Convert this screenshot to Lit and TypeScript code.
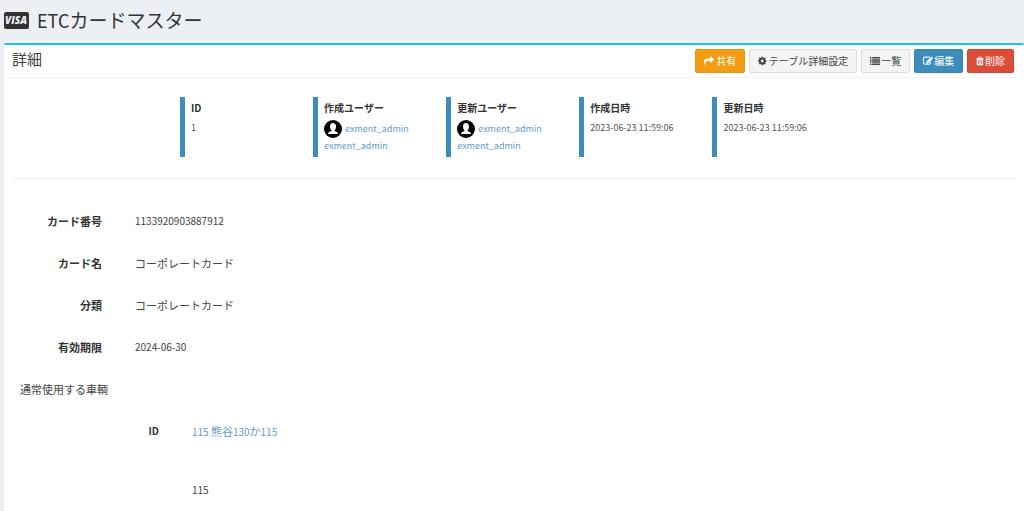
import { LitElement, html, css, svg } from "lit";
import { customElement } from "lit/decorators.js";

const share = svg`<path d="M1792 640q0 26-19 45l-512 512q-19 19-45 19t-45-19-19-45V896H928q-98 0-175.500 6t-154 21.500-133 42.500-105.500 69.500-80 101-48.500 138.500T214 1456q0 55 5 123 0 6 2.500 23.500t2.500 26.500q0 15-8.500 25t-23.500 10q-16 0-28-17-7-9-13-22t-13.500-30-10.500-24Q0 1286 0 1120q0-199 53-333 162-403 875-403h224V128q0-26 19-45t45-19 45 19l512 512q19 19 19 45z"/>`;
const gear = svg`<path fill-rule="evenodd" d="M1024 896q0-106-75-181t-181-75-181 75-75 181 75 181 181 75 181-75 75-181zm512-109v222q0 12-8 23t-20 13l-185 28q-19 54-39 91 35 50 107 138 10 12 10 25t-9 23q-27 37-99 108t-94 71q-12 0-26-9l-138-108q-44 23-91 38-16 136-29 186-7 28-36 28H657q-14 0-24.500-8.500T621 1634l-28-184q-49-16-90-37l-141 107q-10 9-25 9-14 0-25-11-126-114-165-168-7-10-7-23 0-12 8-23 15-21 51-66.500t54-70.500q-27-50-41-99l-183-27q-13-2-21-12.500T0 1005V783q0-12 8-23t19-13l186-28q14-46 39-92-40-57-107-138-10-12-10-24 0-10 9-23 26-36 98.500-107.500T337 263q13 0 26 10l138 107q44-23 91-38 16-136 29-186 7-28 36-28h222q14 0 24.500 8.500T915 158l28 184q49 16 90 37l142-107q9-9 24-9 13 0 25 10 129 119 165 170 7 8 7 22 0 12-8 23-15 21-51 66.500t-54 70.500q26 50 41 98l183 28q13 2 21 12.500t8 23.500z"/>`;
const list = svg`<path d="M0 192h256v256H0zM384 192h1408v256H384zM0 576h256v256H0zM384 576h1408v256H384zM0 960h256v256H0zM384 960h1408v256H384zM0 1344h256v256H0zM384 1344h1408v256H384z"/>`;
const edit = svg`<path stroke="currentColor" stroke-width="60" d="M888 1184l116-116-152-152-116 116v56h96v96h56zm440-720q-16-16-33 1L945 815q-17 17-1 33t33-1l350-350q17-17 1-33zm80 594v190q0 119-84.500 203.500T1120 1536H288q-119 0-203.500-84.500T0 1248V416q0-119 84.500-203.500T288 128h832q63 0 117 25 15 7 18 23 3 17-9 29l-49 49q-14 14-32 8-23-6-45-6H288q-66 0-113 47t-47 113v832q0 66 47 113t113 47h832q66 0 113-47t47-113v-126q0-13 9-22l64-64q15-15 35-7t20 29zm-96-738l288 288-672 672H640V992zm444 132l-92 92-288-288 92-92q28-28 68-28t68 28l152 152q28 28 28 68t-28 68z"/>`;
const trash = svg`<path fill-rule="evenodd" d="M512 1376V672q0-32-32-32h-64q-32 0-32 32v704q0 32 32 32h64q32 0 32-32zm256 0V672q0-32-32-32h-64q-32 0-32 32v704q0 32 32 32h64q32 0 32-32zm256 0V672q0-32-32-32h-64q-32 0-32 32v704q0 32 32 32h64q32 0 32-32zM480 384h448l-48-117q-7-9-17-11H546q-10 2-17 11zm928 32v64q0 32-32 32h-96v948q0 83-47 143.500t-113 60.500H288q-66 0-113-58.500T128 1464V512H32q-32 0-32-32v-64q0-32 32-32h309l70-167q15-37 54-63t79-26h320q40 0 79 26t54 63l70 167h309q32 0 32 32z"/>`;

const icon = (shape: unknown, width: number) =>
  html`<svg class="icon" viewBox="0 0 ${width} 1792" aria-hidden="true">${shape}</svg>`;

@customElement("user-link")
export class UserLink extends LitElement {
  static styles = css`
    :host { display: block; }
    .first { display: flex; align-items: center; gap: 3px; height: 18px; }
    .avatar { width: 18px; height: 18px; flex: none; }
    a { color: #5f9cc9; text-decoration: none; }
    .second { display: block; line-height: 16px; }
  `;
  render() {
    return html`
      <div class="first">
        <svg class="avatar" viewBox="0 0 36 36" aria-hidden="true">
          <circle cx="18" cy="18" r="18" fill="#000" />
          <path fill="#fff" d="M18 6c-4 0-6 3-6 7 0 3 1 6 3 8v1c-3 1-7 2-7 6h20c0-4-4-5-7-6v-1c2-2 3-5 3-8 0-4-2-7-6-7z" />
        </svg>
        <a href="#user">exment_admin</a>
      </div>
      <a class="second" href="#user">exment_admin</a>
    `;
  }
}

@customElement("app-root")
export class AppRoot extends LitElement {
  static styles = css`
    :host {
      display: flex;
      flex-direction: column;
      min-height: 100vh;
      box-sizing: border-box;
      padding-left: 4px;
      background: #ecf0f5;
      color: #333;
      font: 10px/16px "Noto Sans CJK JP", "Noto Sans", sans-serif;
    }
    a { color: #5f9cc9; text-decoration: none; }
    .title {
      display: flex;
      align-items: center;
      gap: 8px;
      height: 40px;
      margin: 0 0 3px;
      font-size: 19px;
      line-height: 38px;
      font-weight: 400;
    }
    .title .latin { font-size: 18px; }
    .visa { width: 25px; height: 17px; flex: none; }
    .visa text { font: italic 800 10px "Open Sans", sans-serif; fill: #ecf0f5; }
    .box {
      flex: 1;
      background: #fff;
      border-top: 2px solid #1fbfef;
      border-radius: 2px 2px 0 0;
    }
    .head {
      display: flex;
      align-items: center;
      justify-content: space-between;
      height: 32px;
      padding: 0 10px 0 8px;
      border-bottom: 1px solid #f4f4f4;
    }
    .head h2 { margin: 0; padding-bottom: 4px; font-size: 15px; font-weight: 400; color: #444; }
    .tools { display: flex; gap: 4px; }
    button {
      display: flex;
      align-items: center;
      gap: 1px;
      height: 24px;
      padding: 0 8px;
      border: 1px solid #ddd;
      border-radius: 2px;
      background: #f4f4f4;
      color: #444;
      font: inherit;
    }
    .spaced { gap: 2px; }
    .icon { height: 10px; fill: currentColor; }
    .share { background: #f39c12; border-color: #e99410; color: #fff; }
    .edit { background: #3c8dbc; border-color: #3a86b3; color: #fff; }
    .delete { background: #dd4b39; border-color: #d94330; color: #fff; }
    .meta {
      display: grid;
      grid-template-columns: repeat(5, 16%);
      margin: 0 8px;
      padding: 19px 4px 21px 168px;
      border-bottom: 1px solid #f1f1f1;
      font-size: 9px;
      color: #555;
    }
    .item { height: 60px; padding: 2px 0 0 6px; box-sizing: border-box; border-left: 5px solid #3c8dbc; }
    .item h3 { margin: 0 0 3px; font-size: 10px; line-height: 18px; color: #333; }
    .fields { margin: 21px 0 0; color: #444; }
    .row { display: flex; align-items: center; height: 42px; }
    .row dt { width: 98px; text-align: right; font-size: 11px; font-weight: 700; color: #333; }
    dd { margin: 0 0 0 33px; }
    .wide { font-size: 11px; }
    .group { margin: 0; padding-left: 16px; font-size: 11px; font-weight: 400; line-height: 42px; color: #444; }
    .nested { margin: 0; color: #444; }
    .nested dt { width: 155px; font-size: 10px; }
    .pair { display: grid; gap: 42px; padding: 13px 0; }
    .nested .row { height: auto; align-items: flex-start; }
    .nested dt { padding: 13px 0; }
  `;

  render() {
    return html`
      <h1 class="title">
        <svg class="visa" viewBox="0 0 25 17" role="img" aria-label="VISA">
          <rect width="25" height="17" rx="2" fill="#333" />
          <text x="1" y="12">VISA</text>
        </svg>
        <span><span class="latin">ETC</span>カードマスター</span>
      </h1>
      <main class="box">
        <header class="head">
          <h2>詳細</h2>
          <div class="tools">
            <button class="share spaced">${icon(share, 1792)}共有</button>
            <button class="spaced">${icon(gear, 1536)}テーブル詳細設定</button>
            <button>${icon(list, 1792)}一覧</button>
            <button class="edit">${icon(edit, 1792)}編集</button>
            <button class="delete">${icon(trash, 1408)}削除</button>
          </div>
        </header>
        <section class="meta">
          <div class="item"><h3>ID</h3>1</div>
          <div class="item"><h3>作成ユーザー</h3><user-link></user-link></div>
          <div class="item"><h3>更新ユーザー</h3><user-link></user-link></div>
          <div class="item"><h3>作成日時</h3>2023-06-23 11:59:06</div>
          <div class="item"><h3>更新日時</h3>2023-06-23 11:59:06</div>
        </section>
        <dl class="fields">
          <div class="row"><dt>カード番号</dt><dd>1133920903887912</dd></div>
          <div class="row"><dt>カード名</dt><dd class="wide">コーポレートカード</dd></div>
          <div class="row"><dt>分類</dt><dd class="wide">コーポレートカード</dd></div>
          <div class="row"><dt>有効期限</dt><dd>2024-06-30</dd></div>
        </dl>
        <h4 class="group">通常使用する車輌</h4>
        <dl class="nested">
          <div class="row">
            <dt>ID</dt>
            <dd class="pair">
              <a href="#vehicle">115 <span class="wide">熊谷</span>130<span class="wide">か</span>115</a>
              <span>115</span>
            </dd>
          </div>
        </dl>
      </main>
    `;
  }
}
